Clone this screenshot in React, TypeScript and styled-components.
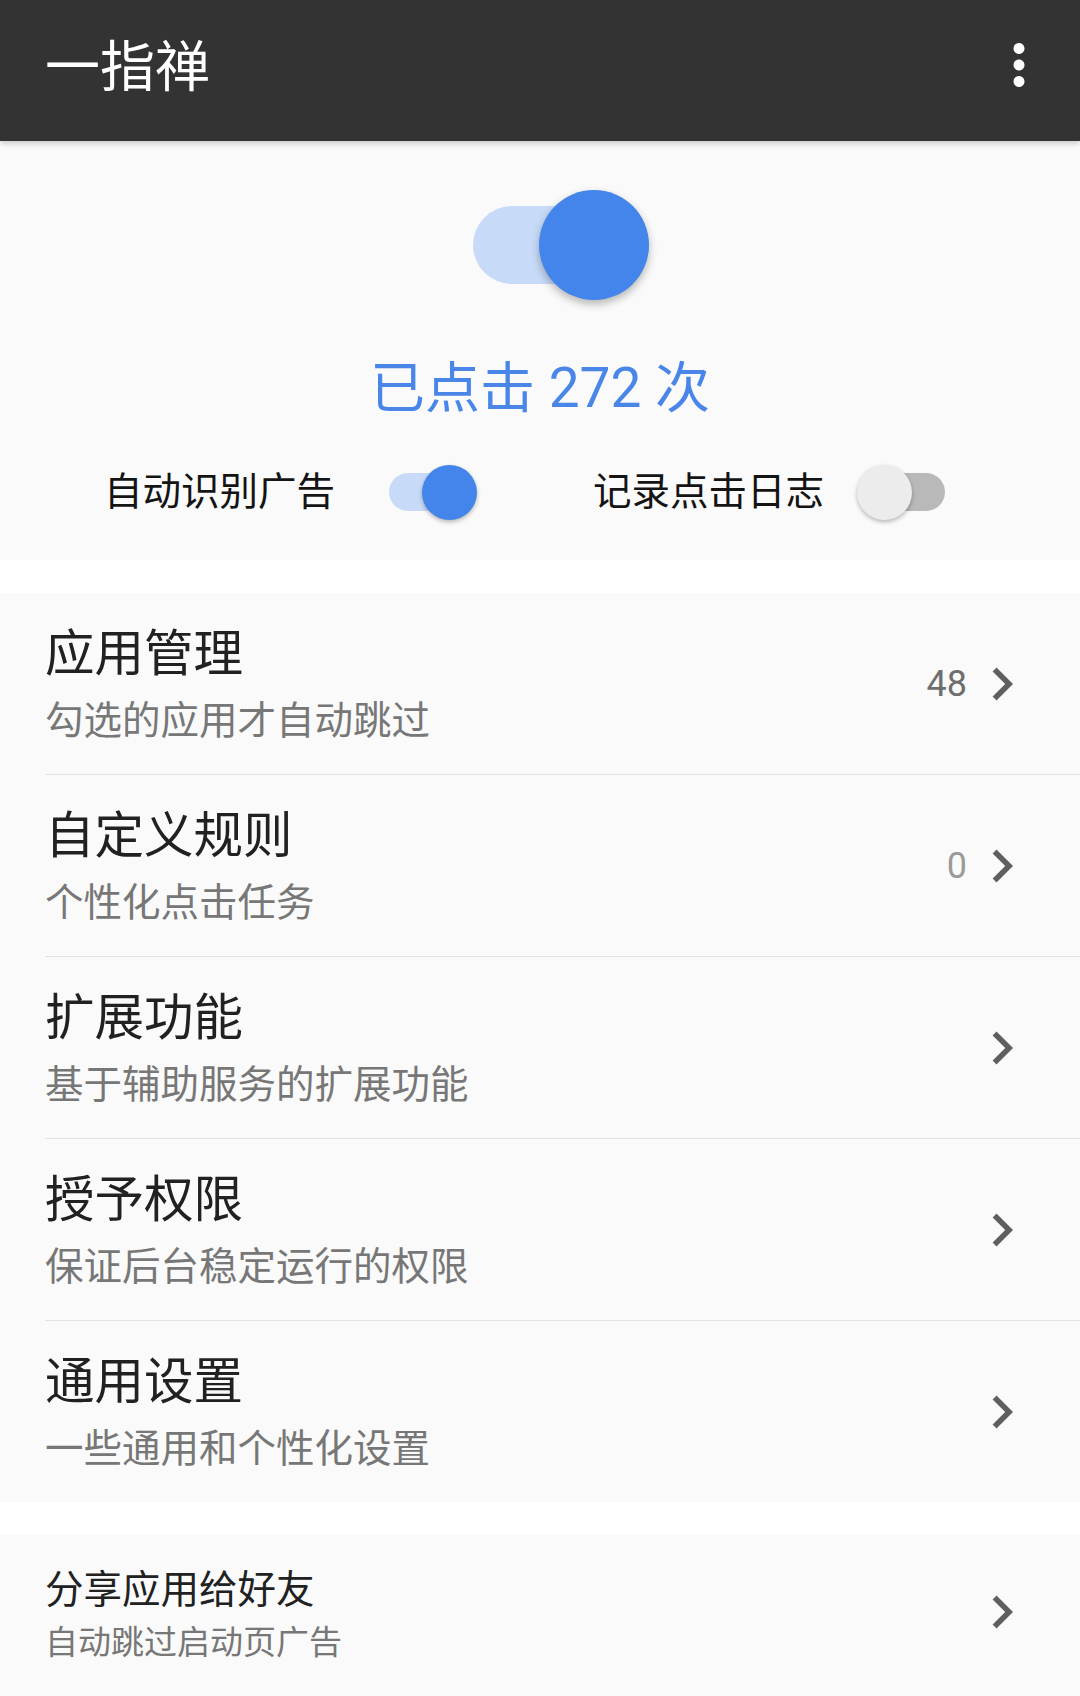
import React from "react";
import styled, { createGlobalStyle, css } from "styled-components";

const GlobalStyle = createGlobalStyle`
  html, body {
    margin: 0;
    padding: 0;
    background: #ffffff;
  }
  body {
    font-family: Roboto, "Noto Sans CJK SC", "Noto Sans", sans-serif;
    -webkit-font-smoothing: antialiased;
  }
  * { box-sizing: border-box; }
`;

const Page = styled.div`
  width: 1080px;
  min-height: 1696px;
  background: #ffffff;
  display: flex;
  flex-direction: column;
  overflow: hidden;
`;

const AppBar = styled.header`
  position: relative;
  z-index: 2;
  height: 141px;
  background: #333333;
  display: flex;
  align-items: center;
  justify-content: space-between;
  padding: 0 28px 8px 45px;
  box-shadow: 0 2px 6px rgba(0, 0, 0, 0.22);
`;

const AppTitle = styled.h1`
  margin: 0;
  color: #ffffff;
  font-size: 55px;
  font-weight: 400;
  line-height: 66px;
  letter-spacing: 0;
`;

const IconButton = styled.div`
  width: 66px;
  height: 66px;
  display: flex;
  align-items: center;
  justify-content: center;
  margin-bottom: 4px;
`;

const Hero = styled.section`
  background: #fafafa;
  display: flex;
  flex-direction: column;
  align-items: center;
  padding: 49px 0 38px;
`;

type SwitchSize = "lg" | "sm";
const dims = {
  lg: { w: 184, h: 110, tw: 172, th: 78, tl: 8, thumb: 110, shadow: "0 4px 8px rgba(0,0,0,0.28)" },
  sm: { w: 92, h: 55, tw: 84, th: 38, tl: 4, thumb: 55, shadow: "0 2px 4px rgba(0,0,0,0.28)" },
};

const SwitchBox = styled.div<{ $size: SwitchSize; $shift?: number }>`
  position: relative;
  flex: none;
  width: ${(p) => dims[p.$size].w}px;
  height: ${(p) => dims[p.$size].h}px;
  margin-left: ${(p) => p.$shift ?? 0}px;
`;

const Track = styled.div<{ $size: SwitchSize; $on: boolean }>`
  position: absolute;
  left: ${(p) => dims[p.$size].tl}px;
  top: ${(p) => (dims[p.$size].h - dims[p.$size].th) / 2}px;
  width: ${(p) => dims[p.$size].tw}px;
  height: ${(p) => dims[p.$size].th}px;
  border-radius: ${(p) => dims[p.$size].th / 2}px;
  background: ${(p) => (p.$on ? "#c7dbf8" : "#b9b9b9")};
`;

const Thumb = styled.div<{ $size: SwitchSize; $on: boolean }>`
  position: absolute;
  top: 0;
  width: ${(p) => dims[p.$size].thumb}px;
  height: ${(p) => dims[p.$size].thumb}px;
  border-radius: 50%;
  box-shadow: ${(p) => dims[p.$size].shadow};
  ${(p) =>
    p.$on
      ? css`
          right: 0;
          background: #4385ea;
        `
      : css`
          left: 0;
          background: #ececec;
        `}
`;

const Switch: React.FC<{ size: SwitchSize; on: boolean; shift?: number }> = ({ size, on, shift }) => (
  <SwitchBox $size={size} $shift={shift}>
    <Track $size={size} $on={on} />
    <Thumb $size={size} $on={on} />
  </SwitchBox>
);

const Counter = styled.div`
  margin-top: 53px;
  height: 70px;
  line-height: 70px;
  font-size: 55px;
  color: #4a86e8;
  font-weight: 400;
`;

const ToggleRow = styled.div`
  margin-top: 39px;
  align-self: stretch;
  height: 60px;
  display: flex;
  align-items: center;
  padding-left: 104px;
  gap: 116px;
`;

const ToggleGroup = styled.div<{ $gap: number }>`
  display: flex;
  align-items: center;
  gap: ${(p) => p.$gap}px;
`;

const ToggleLabel = styled.span`
  font-size: 38.5px;
  line-height: 50px;
  color: #141414;
`;

const Card = styled.section<{ $gapTop: number; $grow?: boolean }>`
  margin-top: ${(p) => p.$gapTop}px;
  background: #fafafa;
  display: flex;
  flex-direction: column;
  flex: ${(p) => (p.$grow ? 1 : "none")};
`;

const Item = styled.div`
  padding-left: 45px;
`;

const ItemInner = styled.div<{ $last?: boolean; $compact?: boolean }>`
  height: ${(p) => (p.$compact ? 154 : p.$last ? 181 : 182)}px;
  display: flex;
  align-items: center;
  padding-right: 45px;
  border-bottom: ${(p) => (p.$last ? "none" : "1.5px solid #e2e2e2")};
`;

const Texts = styled.div`
  flex: 1;
  display: flex;
  flex-direction: column;
`;

const ItemTitle = styled.div<{ $compact?: boolean }>`
  color: #212121;
  font-size: ${(p) => (p.$compact ? 38.5 : 49.5)}px;
  line-height: ${(p) => (p.$compact ? 50 : 62)}px;
`;

const ItemSub = styled.div<{ $compact?: boolean }>`
  color: #777777;
  font-size: ${(p) => (p.$compact ? 33 : 38.5)}px;
  line-height: ${(p) => (p.$compact ? 44 : 48)}px;
  margin-top: ${(p) => (p.$compact ? 6 : 12)}px;
`;

const CompactTexts = styled(Texts)`
  margin-top: 6px;
`;

const Trailing = styled.div`
  display: flex;
  align-items: center;
`;

const Count = styled.span<{ $muted?: boolean }>`
  font-size: 36px;
  line-height: 48px;
  color: ${(p) => (p.$muted ? "#9a9a9a" : "#6e6e6e")};
  margin-right: 2px;
`;

const Chevron = () => (
  <svg width="66" height="66" viewBox="0 0 24 24" aria-hidden>
    <path d="M8.59 16.59L13.17 12 8.59 7.41 10 6l6 6-6 6-1.41-1.41z" fill="#5f5f5f" />
  </svg>
);

const MoreVert = () => (
  <svg width="66" height="66" viewBox="0 0 24 24" aria-hidden>
    <path
      d="M12 8c1.1 0 2-.9 2-2s-.9-2-2-2-2 .9-2 2 .9 2 2 2zm0 2c-1.1 0-2 .9-2 2s.9 2 2 2 2-.9 2-2-.9-2-2-2zm0 6c-1.1 0-2 .9-2 2s.9 2 2 2 2-.9 2-2-.9-2-2-2z"
      fill="#ffffff"
    />
  </svg>
);

const items: { title: string; sub: string; count?: string; muted?: boolean }[] = [
  { title: "应用管理", sub: "勾选的应用才自动跳过", count: "48" },
  { title: "自定义规则", sub: "个性化点击任务", count: "0", muted: true },
  { title: "扩展功能", sub: "基于辅助服务的扩展功能" },
  { title: "授予权限", sub: "保证后台稳定运行的权限" },
  { title: "通用设置", sub: "一些通用和个性化设置" },
];

export default function App() {
  return (
    <Page>
      <GlobalStyle />
      <AppBar>
        <AppTitle>一指禅</AppTitle>
        <IconButton>
          <MoreVert />
        </IconButton>
      </AppBar>

      <Hero>
        <Switch size="lg" on shift={34} />
        <Counter>已点击 272 次</Counter>
        <ToggleRow>
          <ToggleGroup $gap={50}>
            <ToggleLabel>自动识别广告</ToggleLabel>
            <Switch size="sm" on />
          </ToggleGroup>
          <ToggleGroup $gap={33}>
            <ToggleLabel>记录点击日志</ToggleLabel>
            <Switch size="sm" on={false} />
          </ToggleGroup>
        </ToggleRow>
      </Hero>

      <Card $gapTop={33}>
        {items.map((it, i) => (
          <Item key={it.title}>
            <ItemInner $last={i === items.length - 1}>
              <Texts>
                <ItemTitle>{it.title}</ItemTitle>
                <ItemSub>{it.sub}</ItemSub>
              </Texts>
              <Trailing>
                {it.count !== undefined && <Count $muted={it.muted}>{it.count}</Count>}
                <Chevron />
              </Trailing>
            </ItemInner>
          </Item>
        ))}
      </Card>

      <Card $gapTop={33} $grow>
        <Item>
          <ItemInner $last $compact>
            <CompactTexts>
              <ItemTitle $compact>分享应用给好友</ItemTitle>
              <ItemSub $compact>自动跳过启动页广告</ItemSub>
            </CompactTexts>
            <Trailing>
              <Chevron />
            </Trailing>
          </ItemInner>
        </Item>
      </Card>
    </Page>
  );
}
